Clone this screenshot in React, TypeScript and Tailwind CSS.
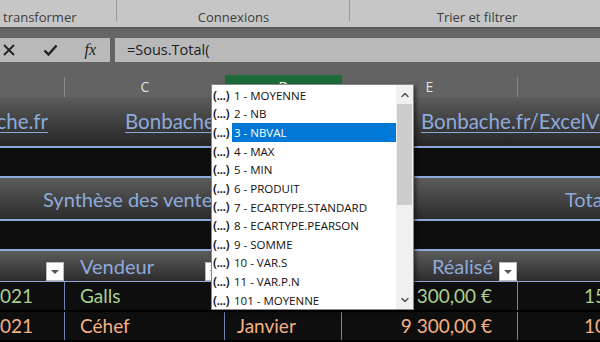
import { ChevronUp, ChevronDown } from 'lucide-react';

const items = [
  '1 - MOYENNE',
  '2 - NB',
  '3 - NBVAL',
  '4 - MAX',
  '5 - MIN',
  '6 - PRODUIT',
  '7 - ECARTYPE.STANDARD',
  '8 - ECARTYPE.PEARSON',
  '9 - SOMME',
  '10 - VAR.S',
  '11 - VAR.P.N',
  '101 - MOYENNE',
];

function FilterButton() {
  return (
    <div className="w-[18px] h-[19px] bg-white border border-[#bbb] flex items-center justify-center">
      <div className="w-0 h-0 border-l-[4px] border-r-[4px] border-t-[4px] border-l-transparent border-r-transparent border-t-[#555]" />
    </div>
  );
}

function AutoComplete() {
  return (
    <div className="absolute left-[211px] top-[84px] w-[203px] h-[226px] bg-white border border-[#8a8a8a] shadow-[2px_2px_4px_rgba(0,0,0,0.5)] flex font-['Open_Sans',sans-serif] text-[11.5px] text-[#111]">
      <div className="flex-1 flex flex-col pt-px">
        {items.map((label, i) => (
          <div key={label} className="h-[18.65px] flex items-center">
            <span className="w-[20px] pl-[1px] text-[13px] font-semibold tracking-[-0.6px] text-[#111]">(...)</span>
            <span
              className={`flex-1 h-full flex items-center pl-[2px] ${
                i === 2 ? 'bg-[#0078d7] text-white' : ''
              }`}
            >
              {label}
            </span>
          </div>
        ))}
      </div>
      <div className="w-[17px] flex flex-col bg-[#f0f0f0]">
        <div className="h-[19px] flex items-center justify-center">
          <ChevronUp size={12} strokeWidth={3} color="#555" />
        </div>
        <div className="h-[101px] mx-px bg-[#cdcdcd]" />
        <div className="flex-1" />
        <div className="h-[18px] flex items-center justify-center">
          <ChevronDown size={12} strokeWidth={3} color="#555" />
        </div>
      </div>
    </div>
  );
}

export default function App() {
  const cellFont = "font-['Lato',sans-serif]";
  return (
    <div className="w-[600px] h-[342px] overflow-hidden relative bg-[#636363]">
      {/* ribbon group labels */}
      <div className="h-[27px] bg-[#c6c6c6] flex font-['Open_Sans',sans-serif] text-[13px] text-[#3d3d3d]">
        <div className="w-[117px] relative flex items-end pl-[3px]">
          transformer
          <div className="absolute right-0 top-0 h-[21px] w-px bg-[#9a9a9a]" />
        </div>
        <div className="w-[233px] relative flex items-end justify-center">
          Connexions
          <div className="absolute right-0 top-0 h-[21px] w-px bg-[#9a9a9a]" />
        </div>
        <div className="flex-1 flex items-end justify-center pl-[4px]">Trier et filtrer</div>
      </div>
      <div className="h-[11px] bg-[#666] border-t-2 border-[#5a5a5a]" />

      {/* formula bar */}
      <div className="h-[24px] flex gap-[5px]">
        <div className="w-[110px] bg-[#b9b9b9] flex items-center justify-between px-[2px] text-[#222]">
          <svg width="14" height="14" viewBox="0 0 14 14">
            <path d="M2 2 L12 12 M12 2 L2 12" stroke="#222" strokeWidth="1.8" />
          </svg>
          <svg width="15" height="14" viewBox="0 0 15 14">
            <path d="M1.5 7.5 L5.5 11.5 L13.5 2.5" stroke="#222" strokeWidth="2.4" fill="none" />
          </svg>
          <span className="font-['Liberation_Serif',serif] italic text-[16px] mr-[12px] leading-none">fx</span>
        </div>
        <div className="flex-1 bg-[#b9b9b9] flex items-center pl-[12px] font-['Open_Sans',sans-serif] text-[14.5px] text-[#1d1d1d]">
          =Sous.Total(
        </div>
      </div>
      <div className="h-[13px]" />

      {/* column headers */}
      <div className="h-[22px] flex font-['Open_Sans',sans-serif] text-[14px] text-[#e0e0e0]">
        <div className="w-[65px] border-r border-[#8a8a8a] mt-[2px]" />
        <div className="w-[160px] flex items-center justify-center">C</div>
        <div className="w-[117px] bg-[#1e6b3a] flex items-center justify-center text-white">D</div>
        <div className="w-[176px] flex items-center justify-center border-r border-[#8a8a8a] mt-[2px] pb-[2px]">E</div>
        <div className="flex-1" />
      </div>

      <div className={`${cellFont}`}>
        {/* row 1: links */}
        <div className="h-[49px] bg-gradient-to-b from-[#5d5d5d] to-[#262626] flex items-center text-[20.5px] text-[#8eaadb] underline underline-offset-[3px] decoration-1 whitespace-nowrap">
          <div className="w-[65px] shrink-0 flex justify-end overflow-hidden pr-[17px]">
            <span>Bonbache.fr</span>
          </div>
          <div className="w-[277px] shrink-0 pl-[60px]">Bonbache.fr</div>
          <div className="pl-[79px] shrink-0">Bonbache.fr/ExcelVBA</div>
        </div>
        <div className="h-[32px] bg-[#0e0e0e] border-y-2 border-[#8ea9db]" />

        {/* row 3: title */}
        <div className="h-[41px] bg-gradient-to-b from-[#5d5d5d] to-[#2c2c2c] flex items-center text-[20px] text-[#8eaadb] whitespace-nowrap">
          <div className="w-[565px] shrink-0 pl-[43px]">Synthèse des ventes</div>
          <div className="shrink-0">Total</div>
        </div>
        <div className="h-[32px] bg-[#0e0e0e] border-y-2 border-[#8ea9db]" />

        {/* table header */}
        <div className="h-[31px] bg-gradient-to-b from-[#5d5d5d] to-[#2c2c2c] flex text-[20px] text-[#8eaadb] border-b border-[#8ea9db]">
          <div className="w-[65px] flex items-end justify-end pr-px">
            <FilterButton />
          </div>
          <div className="w-[160px] flex items-center pl-[15px] relative">
            Vendeur
            <div className="absolute right-[2px] bottom-0">
              <FilterButton />
            </div>
          </div>
          <div className="w-[117px]" />
          <div className="w-[176px] flex items-center justify-end pr-px">
            <span className="mr-[6px]">Réalisé</span>
            <div className="self-end">
              <FilterButton />
            </div>
          </div>
          <div className="flex-1" />
        </div>

        {/* data rows */}
        {[
          { d: '021', v: 'Galls', m: 'Janvier', r: '15 300,00 €', o: '15 000,00 €', c: 'text-[#a9d08e]' },
          { d: '021', v: 'Céhef', m: 'Janvier', r: '9 300,00 €', o: '10 000,00 €', c: 'text-[#f4b183]' },
        ].map((row, i) => (
          <div
            key={i}
            className={`h-[30px] bg-[#0e0e0e] flex items-center text-[19px] whitespace-nowrap border-b-2 border-[#000] ${row.c}`}
          >
            <div className="w-[65px] shrink-0 h-full flex items-center overflow-hidden border-r border-[#6f86b0]">
              <span>{row.d}</span>
            </div>
            <div className="w-[160px] shrink-0 h-full flex items-center pl-[15px] border-r border-[#6f86b0]">{row.v}</div>
            <div className="w-[117px] shrink-0 h-full flex items-center pl-[12px] border-r border-[#6f86b0]">{row.m}</div>
            <div className="w-[176px] shrink-0 h-full flex items-center justify-end pr-[25px] border-r border-[#6f86b0]">
              {row.r}
            </div>
            <div className="flex-1 h-full flex items-center pl-[66px] overflow-hidden">{row.o}</div>
          </div>
        ))}
      </div>

      <AutoComplete />
    </div>
  );
}
